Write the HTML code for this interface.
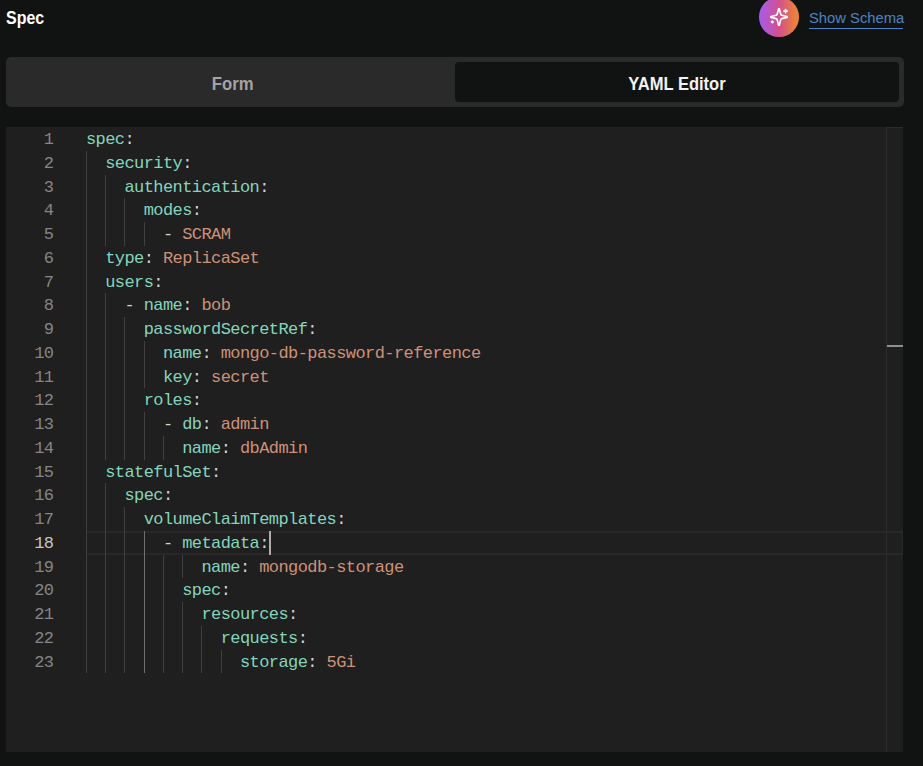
<!DOCTYPE html>
<html><head><meta charset="utf-8">
<style>
html,body{margin:0;padding:0;}
body{width:923px;height:766px;overflow:hidden;background:#111312;position:relative;font-family:"Liberation Sans",sans-serif;}
.abs{position:absolute;}
#title{left:6px;top:3px;font-size:19px;font-weight:bold;color:#fff;line-height:30px;white-space:nowrap;transform:scaleX(0.84);transform-origin:0 0;}
#spark{left:759px;top:-3px;width:40px;height:40px;border-radius:50%;background:linear-gradient(90deg,#a35cf0 0%,#d4508e 50%,#ee8a2a 100%);}
#schema{left:809px;top:7px;font-size:15.5px;color:#4d82c4;line-height:22px;white-space:nowrap;transform:scaleX(0.953);transform-origin:0 0;}
#schemaul{left:809px;top:28px;width:94px;height:1px;background:#4d82c4;}
#tabs{left:6px;top:57px;width:898px;height:50px;background:#2a2a2a;border-radius:5px;}
#active{left:455px;top:62px;width:444px;height:40px;background:#111312;border-radius:4px;}
.tab{top:64px;height:40px;line-height:40px;text-align:center;font-size:19px;font-weight:bold;white-space:nowrap;}
.tab span{display:inline-block;transform:scaleX(0.88);}
#form{left:11px;width:444px;color:#a3a3a3;}
#yaml{left:455px;width:444px;color:#f2f2f2;}
#yaml span{transform:scaleX(0.87);}
#editor{left:6px;top:127px;width:897px;height:625px;background:#1f1f1f;overflow:hidden;}
#sb{left:880px;top:0;width:1px;height:625px;background:#2c2c2c;}
#mark{left:881px;top:218px;width:16px;height:2px;background:#8f8f8f;}
.ln{position:absolute;left:0;width:47.4px;margin-top:1px;text-align:right;font-family:"Liberation Mono",monospace;font-size:17px;letter-spacing:-0.58px;color:#858585;height:23.75px;line-height:23.75px;}
.code{position:absolute;left:80px;margin-top:1px;font-family:"Liberation Mono",monospace;font-size:17px;letter-spacing:-0.58px;white-space:pre;height:23.75px;line-height:23.75px;color:#d4d4d4;}
.ln.act{color:#c6c6c6;}
.k{color:#84d4bc;}
.s{color:#ce9178;}
.g{position:absolute;width:1px;background:#404040;}
.ga{background:#707070;}
#cur{left:81px;top:404px;width:816px;height:24px;box-sizing:border-box;border:2px solid #282828;border-left:0;border-right-width:1px;}
#caret{left:263px;top:403.75px;width:2px;height:23.75px;background:#aeafad;}
</style></head><body>
<div id="title" class="abs">Spec</div>
<div id="spark" class="abs"></div>
<svg class="abs" style="left:769.05px;top:7.05px" width="19.9" height="19.9" viewBox="0 0 24 24" fill="none" stroke="#fff" stroke-width="2" stroke-linecap="round" stroke-linejoin="round"><path d="M9.937 15.5A2 2 0 0 0 8.5 14.063l-6.135-1.582a.5.5 0 0 1 0-.962L8.5 9.936A2 2 0 0 0 9.937 8.5l1.582-6.135a.5.5 0 0 1 .963 0L14.063 8.5A2 2 0 0 0 15.5 9.937l6.135 1.581a.5.5 0 0 1 0 .964L15.5 14.063a2 2 0 0 0-1.437 1.437l-1.582 6.135a.5.5 0 0 1-.963 0z"/><path d="M20 3v4"/><path d="M22 5h-4"/><path d="M4 17v2"/><path d="M5 18H3"/></svg>
<div id="schema" class="abs">Show Schema</div>
<div id="schemaul" class="abs"></div>
<div id="tabs" class="abs"></div>
<div id="active" class="abs"></div>
<div id="form" class="abs tab"><span>Form</span></div>
<div id="yaml" class="abs tab"><span>YAML Editor</span></div>
<div id="editor" class="abs">
<div id="code">
<div id="cur" class="abs"></div>
<div class="g" style="left:80px;top:23.75px;height:23.75px"></div>
<div class="g" style="left:80px;top:47.50px;height:23.75px"></div>
<div class="g" style="left:99px;top:47.50px;height:23.75px"></div>
<div class="g" style="left:80px;top:71.25px;height:23.75px"></div>
<div class="g" style="left:99px;top:71.25px;height:23.75px"></div>
<div class="g" style="left:118px;top:71.25px;height:23.75px"></div>
<div class="g" style="left:80px;top:95.00px;height:23.75px"></div>
<div class="g" style="left:99px;top:95.00px;height:23.75px"></div>
<div class="g" style="left:118px;top:95.00px;height:23.75px"></div>
<div class="g" style="left:138px;top:95.00px;height:23.75px"></div>
<div class="g" style="left:80px;top:118.75px;height:23.75px"></div>
<div class="g" style="left:80px;top:142.50px;height:23.75px"></div>
<div class="g" style="left:80px;top:166.25px;height:23.75px"></div>
<div class="g" style="left:99px;top:166.25px;height:23.75px"></div>
<div class="g" style="left:80px;top:190.00px;height:23.75px"></div>
<div class="g" style="left:99px;top:190.00px;height:23.75px"></div>
<div class="g" style="left:118px;top:190.00px;height:23.75px"></div>
<div class="g" style="left:80px;top:213.75px;height:23.75px"></div>
<div class="g" style="left:99px;top:213.75px;height:23.75px"></div>
<div class="g" style="left:118px;top:213.75px;height:23.75px"></div>
<div class="g" style="left:138px;top:213.75px;height:23.75px"></div>
<div class="g" style="left:80px;top:237.50px;height:23.75px"></div>
<div class="g" style="left:99px;top:237.50px;height:23.75px"></div>
<div class="g" style="left:118px;top:237.50px;height:23.75px"></div>
<div class="g" style="left:138px;top:237.50px;height:23.75px"></div>
<div class="g" style="left:80px;top:261.25px;height:23.75px"></div>
<div class="g" style="left:99px;top:261.25px;height:23.75px"></div>
<div class="g" style="left:118px;top:261.25px;height:23.75px"></div>
<div class="g" style="left:80px;top:285.00px;height:23.75px"></div>
<div class="g" style="left:99px;top:285.00px;height:23.75px"></div>
<div class="g" style="left:118px;top:285.00px;height:23.75px"></div>
<div class="g" style="left:138px;top:285.00px;height:23.75px"></div>
<div class="g" style="left:80px;top:308.75px;height:23.75px"></div>
<div class="g" style="left:99px;top:308.75px;height:23.75px"></div>
<div class="g" style="left:118px;top:308.75px;height:23.75px"></div>
<div class="g" style="left:138px;top:308.75px;height:23.75px"></div>
<div class="g" style="left:157px;top:308.75px;height:23.75px"></div>
<div class="g" style="left:80px;top:332.50px;height:23.75px"></div>
<div class="g" style="left:80px;top:356.25px;height:23.75px"></div>
<div class="g" style="left:99px;top:356.25px;height:23.75px"></div>
<div class="g" style="left:80px;top:380.00px;height:23.75px"></div>
<div class="g" style="left:99px;top:380.00px;height:23.75px"></div>
<div class="g" style="left:118px;top:380.00px;height:23.75px"></div>
<div class="g" style="left:80px;top:403.75px;height:23.75px"></div>
<div class="g" style="left:99px;top:403.75px;height:23.75px"></div>
<div class="g" style="left:118px;top:403.75px;height:23.75px"></div>
<div class="g ga" style="left:138px;top:403.75px;height:23.75px"></div>
<div class="g" style="left:80px;top:427.50px;height:23.75px"></div>
<div class="g" style="left:99px;top:427.50px;height:23.75px"></div>
<div class="g" style="left:118px;top:427.50px;height:23.75px"></div>
<div class="g ga" style="left:138px;top:427.50px;height:23.75px"></div>
<div class="g" style="left:157px;top:427.50px;height:23.75px"></div>
<div class="g" style="left:176px;top:427.50px;height:23.75px"></div>
<div class="g" style="left:80px;top:451.25px;height:23.75px"></div>
<div class="g" style="left:99px;top:451.25px;height:23.75px"></div>
<div class="g" style="left:118px;top:451.25px;height:23.75px"></div>
<div class="g ga" style="left:138px;top:451.25px;height:23.75px"></div>
<div class="g" style="left:157px;top:451.25px;height:23.75px"></div>
<div class="g" style="left:80px;top:475.00px;height:23.75px"></div>
<div class="g" style="left:99px;top:475.00px;height:23.75px"></div>
<div class="g" style="left:118px;top:475.00px;height:23.75px"></div>
<div class="g ga" style="left:138px;top:475.00px;height:23.75px"></div>
<div class="g" style="left:157px;top:475.00px;height:23.75px"></div>
<div class="g" style="left:176px;top:475.00px;height:23.75px"></div>
<div class="g" style="left:80px;top:498.75px;height:23.75px"></div>
<div class="g" style="left:99px;top:498.75px;height:23.75px"></div>
<div class="g" style="left:118px;top:498.75px;height:23.75px"></div>
<div class="g ga" style="left:138px;top:498.75px;height:23.75px"></div>
<div class="g" style="left:157px;top:498.75px;height:23.75px"></div>
<div class="g" style="left:176px;top:498.75px;height:23.75px"></div>
<div class="g" style="left:195px;top:498.75px;height:23.75px"></div>
<div class="g" style="left:80px;top:522.50px;height:23.75px"></div>
<div class="g" style="left:99px;top:522.50px;height:23.75px"></div>
<div class="g" style="left:118px;top:522.50px;height:23.75px"></div>
<div class="g ga" style="left:138px;top:522.50px;height:23.75px"></div>
<div class="g" style="left:157px;top:522.50px;height:23.75px"></div>
<div class="g" style="left:176px;top:522.50px;height:23.75px"></div>
<div class="g" style="left:195px;top:522.50px;height:23.75px"></div>
<div class="g" style="left:215px;top:522.50px;height:23.75px"></div>
<div class="ln" style="top:0.00px">1</div>
<div class="code" style="top:0.00px"><span class="k">spec</span><span class="p">:</span></div>
<div class="ln" style="top:23.75px">2</div>
<div class="code" style="top:23.75px">  <span class="k">security</span><span class="p">:</span></div>
<div class="ln" style="top:47.50px">3</div>
<div class="code" style="top:47.50px">    <span class="k">authentication</span><span class="p">:</span></div>
<div class="ln" style="top:71.25px">4</div>
<div class="code" style="top:71.25px">      <span class="k">modes</span><span class="p">:</span></div>
<div class="ln" style="top:95.00px">5</div>
<div class="code" style="top:95.00px">        <span class="p">- </span><span class="s">SCRAM</span></div>
<div class="ln" style="top:118.75px">6</div>
<div class="code" style="top:118.75px">  <span class="k">type</span><span class="p">:</span> <span class="s">ReplicaSet</span></div>
<div class="ln" style="top:142.50px">7</div>
<div class="code" style="top:142.50px">  <span class="k">users</span><span class="p">:</span></div>
<div class="ln" style="top:166.25px">8</div>
<div class="code" style="top:166.25px">    <span class="p">- </span><span class="k">name</span><span class="p">:</span> <span class="s">bob</span></div>
<div class="ln" style="top:190.00px">9</div>
<div class="code" style="top:190.00px">      <span class="k">passwordSecretRef</span><span class="p">:</span></div>
<div class="ln" style="top:213.75px">10</div>
<div class="code" style="top:213.75px">        <span class="k">name</span><span class="p">:</span> <span class="s">mongo-db-password-reference</span></div>
<div class="ln" style="top:237.50px">11</div>
<div class="code" style="top:237.50px">        <span class="k">key</span><span class="p">:</span> <span class="s">secret</span></div>
<div class="ln" style="top:261.25px">12</div>
<div class="code" style="top:261.25px">      <span class="k">roles</span><span class="p">:</span></div>
<div class="ln" style="top:285.00px">13</div>
<div class="code" style="top:285.00px">        <span class="p">- </span><span class="k">db</span><span class="p">:</span> <span class="s">admin</span></div>
<div class="ln" style="top:308.75px">14</div>
<div class="code" style="top:308.75px">          <span class="k">name</span><span class="p">:</span> <span class="s">dbAdmin</span></div>
<div class="ln" style="top:332.50px">15</div>
<div class="code" style="top:332.50px">  <span class="k">statefulSet</span><span class="p">:</span></div>
<div class="ln" style="top:356.25px">16</div>
<div class="code" style="top:356.25px">    <span class="k">spec</span><span class="p">:</span></div>
<div class="ln" style="top:380.00px">17</div>
<div class="code" style="top:380.00px">      <span class="k">volumeClaimTemplates</span><span class="p">:</span></div>
<div class="ln act" style="top:403.75px">18</div>
<div class="code" style="top:403.75px">        <span class="p">- </span><span class="k">metadata</span><span class="p">:</span></div>
<div class="ln" style="top:427.50px">19</div>
<div class="code" style="top:427.50px">            <span class="k">name</span><span class="p">:</span> <span class="s">mongodb-storage</span></div>
<div class="ln" style="top:451.25px">20</div>
<div class="code" style="top:451.25px">          <span class="k">spec</span><span class="p">:</span></div>
<div class="ln" style="top:475.00px">21</div>
<div class="code" style="top:475.00px">            <span class="k">resources</span><span class="p">:</span></div>
<div class="ln" style="top:498.75px">22</div>
<div class="code" style="top:498.75px">              <span class="k">requests</span><span class="p">:</span></div>
<div class="ln" style="top:522.50px">23</div>
<div class="code" style="top:522.50px">                <span class="k">storage</span><span class="p">:</span> <span class="s">5Gi</span></div>
<div id="caret" class="abs"></div>
<div id="sb" class="abs"></div>
<div class="abs" style="left:880px;top:0;width:17px;height:1px;background:#2c2c2c"></div>
<div id="mark" class="abs"></div>
</div><!--endcode-->
</div>
</body></html>
